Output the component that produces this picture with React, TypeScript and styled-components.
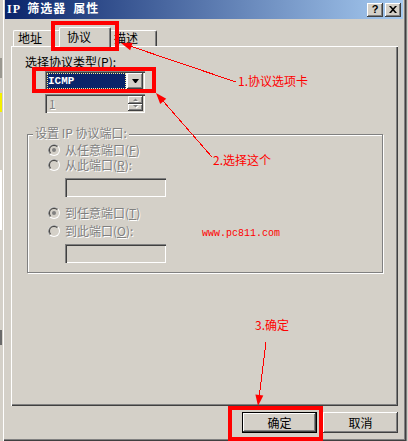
import React from 'react';
import styled, { createGlobalStyle, css } from 'styled-components';

const face = '#d4d0c8';
const shadow = '#808080';
const dark = '#404040';
const red = '#ff0000';

const GlobalStyle = createGlobalStyle`
  html, body {
    margin: 0;
    padding: 0;
    background: ${face};
  }
  body {
    font-family: "Noto Sans CJK SC", "Liberation Sans", sans-serif;
    font-size: 12px;
    color: #000;
  }
`;

const raised = css`
  background: ${face};
  box-shadow: inset -1px -1px ${dark}, inset 1px 1px #fff,
    inset -2px -2px ${shadow}, inset 2px 2px ${face};
`;

const sunken = css`
  box-shadow: inset 1px 1px ${shadow}, inset 2px 2px ${dark},
    inset -1px -1px #fff, inset -2px -2px ${face};
`;

const grayed = css`
  color: ${shadow};
  text-shadow: 1px 1px 0 #fff;
`;

const Screen = styled.div`
  position: relative;
  display: flex;
  width: 408px;
  height: 441px;
  overflow: hidden;
`;

const LeftBackdrop = styled.div`
  flex: none;
  width: 2px;
  background: linear-gradient(
    to bottom,
    ${face} 0 58px,
    #9a9890 58px 78px,
    ${face} 78px 93px,
    #f4f000 93px 112px,
    ${face} 112px 170px,
    #fff 170px 230px,
    ${face} 230px 330px,
    #6a6a6a 330px 345px,
    ${face} 345px
  );
`;

const RightBackdrop = styled.div`
  flex: none;
  width: 2px;
  background: linear-gradient(to right, ${shadow} 0 1px, ${face} 1px);
`;

const Window = styled.div`
  flex: none;
  width: 404px;
  height: 441px;
  box-sizing: border-box;
  padding: 0 3px 3px;
  display: flex;
  flex-direction: column;
  background: ${face};
  box-shadow: inset 1px 0 ${face}, inset 2px 0 #fff, inset -1px -1px ${dark},
    inset -2px -2px ${shadow};
`;

const TitleBar = styled.div`
  flex: none;
  height: 19px;
  display: flex;
  align-items: center;
  gap: 2px;
  padding: 0 2px 0 2px;
  background: linear-gradient(to right, #0a246a, #a6caf0);
`;

const TitleText = styled.div`
  flex: 1;
  color: #fff;
  font-family: "Liberation Serif", "Noto Sans CJK SC", serif;
  font-weight: bold;
  font-size: 12px;
  line-height: 13px;
  letter-spacing: 1px;
  word-spacing: 3px;
`;

const CaptionButton = styled.div`
  width: 16px;
  height: 14px;
  box-sizing: border-box;
  display: flex;
  align-items: center;
  justify-content: center;
  font-family: "Liberation Sans", sans-serif;
  font-weight: bold;
  font-size: 11px;
  line-height: 11px;
  ${raised};
`;

const Client = styled.div`
  flex: 1;
  display: flex;
  flex-direction: column;
  padding: 8px 5px 5px 6px;
`;

const TabRow = styled.div`
  display: flex;
  align-items: flex-end;
  height: 19px;
  padding-left: 2px;
  position: relative;
  z-index: 1;
`;

const Tab = styled.div<{ $active?: boolean }>`
  position: relative;
  z-index: ${(p) => (p.$active ? 2 : 1)};
  box-sizing: border-box;
  width: ${(p) => (p.$active ? 52 : 48)}px;
  height: ${(p) => (p.$active ? 20 : 16)}px;
  margin: ${(p) => (p.$active ? '0 -2px -1px' : '0')};
  padding: ${(p) => (p.$active ? '2px 0 0 7px' : '0 0 0 4px')};
  line-height: 13px;
  background: ${face};
  border-top: 1px solid #fff;
  border-left: 1px solid #fff;
  border-right: 1px solid ${dark};
  border-top-left-radius: 2px;
  border-top-right-radius: 2px;
  box-shadow: inset -1px 0 ${shadow};
`;

const Panel = styled.div`
  box-sizing: border-box;
  height: 360px;
  padding: 9px 0 0 14px;
  box-shadow: inset 1px 1px #fff, inset -1px -1px ${dark},
    inset -2px -2px ${shadow};
`;

const FieldLabel = styled.div`
  line-height: 13px;
`;

const Key = styled.span`
  text-decoration: underline;
`;

const Combo = styled.div`
  box-sizing: border-box;
  width: 100px;
  height: 20px;
  margin: 3px 0 0 20px;
  padding: 2px;
  display: flex;
  background: #fff;
  ${sunken};
`;

const ComboValue = styled.div`
  flex: 1;
  margin-right: 1px;
  padding-left: 1px;
  background: #0a246a;
  outline: 1px dotted #f5ec9a;
  outline-offset: -1px;
  color: #fff;
  font-family: "Liberation Mono", monospace;
  font-weight: bold;
  font-size: 11px;
  line-height: 16px;
`;

const DropButton = styled.div`
  width: 16px;
  display: flex;
  align-items: center;
  justify-content: center;
  ${raised};
`;

const Spin = styled.div`
  box-sizing: border-box;
  width: 100px;
  height: 19px;
  margin: 3px 0 0 20px;
  padding: 2px;
  display: flex;
  background: ${face};
  ${sunken};
`;

const SpinValue = styled.div`
  flex: 1;
  padding-left: 2px;
  line-height: 15px;
  ${grayed};
`;

const SpinButtons = styled.div`
  width: 15px;
  display: flex;
  flex-direction: column;
`;

const SpinButton = styled.div`
  flex: 1;
  display: flex;
  align-items: center;
  justify-content: center;
  ${raised};
`;

const Group = styled.fieldset`
  box-sizing: border-box;
  width: 356px;
  margin: 13px 0 0 2px;
  padding: 0 0 9px;
  min-inline-size: 0;
  border: 1px solid ${shadow};
  box-shadow: 1px 1px 0 #fff, inset 1px 1px 0 #fff;
`;

const Legend = styled.legend`
  margin-left: 5px;
  padding: 0 2px 3px;
  line-height: 13px;
  background: ${face};
  ${grayed};
`;

const RadioRow = styled.div<{ $gap: number }>`
  display: flex;
  align-items: center;
  gap: 5px;
  height: 14px;
  margin-top: ${(p) => p.$gap}px;
  padding-left: 20px;
  line-height: 14px;
  ${grayed};
`;

const PortBox = styled.div<{ $gap: number }>`
  width: 101px;
  height: 19px;
  margin: ${(p) => p.$gap}px 0 0 37px;
  background: ${face};
  ${sunken};
`;

const ButtonRow = styled.div`
  display: flex;
  justify-content: flex-end;
  gap: 6px;
  margin-top: 6px;
`;

const PushButton = styled.div<{ $default?: boolean }>`
  box-sizing: border-box;
  width: 75px;
  height: 21px;
  display: flex;
  align-items: center;
  justify-content: center;
  line-height: 13px;
  ${raised};
  border: ${(p) => (p.$default ? '1px solid #000' : 'none')};
`;

const Overlay = styled.div`
  position: absolute;
  inset: 0;
  z-index: 10;
  pointer-events: none;
`;

const RedBox = styled.div<{ $x: number; $y: number; $w: number; $h: number }>`
  position: absolute;
  left: ${(p) => p.$x}px;
  top: ${(p) => p.$y}px;
  width: ${(p) => p.$w}px;
  height: ${(p) => p.$h}px;
  box-sizing: border-box;
  border: 4px solid ${red};
`;

const Note = styled.div<{ $x: number; $y: number }>`
  position: absolute;
  left: ${(p) => p.$x}px;
  top: ${(p) => p.$y}px;
  color: ${red};
  line-height: 13px;
  white-space: nowrap;
`;

const Watermark = styled(Note)`
  font-family: "Liberation Mono", monospace;
  font-size: 10px;
  line-height: 12px;
`;

const Arrows = styled.svg`
  position: absolute;
  left: 0;
  top: 0;
`;

const callouts = [
  { sx: 236, sy: 82, tx: 121, ty: 43 },
  { sx: 212, sy: 157, tx: 156, ty: 93 },
  { sx: 266, sy: 342, tx: 258, ty: 406 },
];

const arrowShape = (sx: number, sy: number, tx: number, ty: number) => {
  const len = Math.hypot(tx - sx, ty - sy);
  const ux = (tx - sx) / len;
  const uy = (ty - sy) / len;
  const bx = tx - ux * 11;
  const by = ty - uy * 11;
  return {
    bx,
    by,
    head: `${tx},${ty} ${bx - uy * 4},${by + ux * 4} ${bx + uy * 4},${by - ux * 4}`,
  };
};

const RadioMark: React.FC<{ checked?: boolean }> = ({ checked }) => (
  <svg width="12" height="12" viewBox="0 0 12 12">
    <circle cx="6" cy="6" r="6" fill="#fff" />
    <path d="M1.76 10.24A6 6 0 0 1 10.24 1.76Z" fill={shadow} />
    <circle cx="6" cy="6" r="5" fill={face} />
    <path d="M2.46 9.54A5 5 0 0 1 9.54 2.46Z" fill={dark} />
    <circle cx="6" cy="6" r="4" fill={face} />
    {checked && <circle cx="6" cy="6" r="2" fill={shadow} />}
  </svg>
);

const App: React.FC = () => {
  return (
    <>
      <GlobalStyle />
      <Screen>
        <LeftBackdrop />
        <Window>
          <TitleBar>
            <TitleText>IP 筛选器 属性</TitleText>
            <CaptionButton>?</CaptionButton>
            <CaptionButton>
              <svg width="8" height="7" viewBox="0 0 8 7">
                <path
                  d="M0 0h2l2 2.3L6 0h2L5 3.5 8 7H6L4 4.7 2 7H0l3-3.5z"
                  fill="#000"
                />
              </svg>
            </CaptionButton>
          </TitleBar>
          <Client>
            <TabRow>
              <Tab>地址</Tab>
              <Tab $active>协议</Tab>
              <Tab>描述</Tab>
            </TabRow>
            <Panel>
              <FieldLabel>
                选择协议类型(<Key>P</Key>):
              </FieldLabel>
              <Combo>
                <ComboValue>ICMP</ComboValue>
                <DropButton>
                  <svg width="7" height="4" viewBox="0 0 7 4">
                    <path d="M0 0h7L4 4H3z" fill="#000" />
                  </svg>
                </DropButton>
              </Combo>
              <Spin>
                <SpinValue>1</SpinValue>
                <SpinButtons>
                  <SpinButton>
                    <svg width="6" height="4" viewBox="0 0 6 4">
                      <path d="M1 4h5L3.5 1.5z" fill="#fff" />
                      <path d="M0 3h5L2.5 0.5z" fill={shadow} />
                    </svg>
                  </SpinButton>
                  <SpinButton>
                    <svg width="6" height="4" viewBox="0 0 6 4">
                      <path d="M1 1h5L3.5 3.5z" fill="#fff" />
                      <path d="M0 0h5L2.5 2.5z" fill={shadow} />
                    </svg>
                  </SpinButton>
                </SpinButtons>
              </Spin>
              <Group>
                <Legend>设置 IP 协议端口:</Legend>
                <RadioRow $gap={1}>
                  <RadioMark checked />
                  <span>
                    从任意端口(<Key>F</Key>)
                  </span>
                </RadioRow>
                <RadioRow $gap={1}>
                  <RadioMark />
                  <span>
                    从此端口(<Key>R</Key>):
                  </span>
                </RadioRow>
                <PortBox $gap={6} />
                <RadioRow $gap={9}>
                  <RadioMark checked />
                  <span>
                    到任意端口(<Key>T</Key>)
                  </span>
                </RadioRow>
                <RadioRow $gap={4}>
                  <RadioMark />
                  <span>
                    到此端口(<Key>O</Key>):
                  </span>
                </RadioRow>
                <PortBox $gap={6} />
              </Group>
            </Panel>
            <ButtonRow>
              <PushButton $default>确定</PushButton>
              <PushButton>取消</PushButton>
            </ButtonRow>
          </Client>
        </Window>
        <RightBackdrop />

        <Overlay>
          <RedBox $x={51} $y={21} $w={68} $h={30} />
          <RedBox $x={32} $y={67} $w={124} $h={26} />
          <RedBox $x={228} $y={406} $w={95} $h={35} />
          <Arrows width="408" height="441" viewBox="0 0 408 441">
            {callouts.map(({ sx, sy, tx, ty }) => {
              const a = arrowShape(sx, sy, tx, ty);
              return (
                <g key={`${sx}-${sy}`}>
                  <line
                    x1={sx}
                    y1={sy}
                    x2={a.bx}
                    y2={a.by}
                    stroke={red}
                    strokeWidth="1"
                    shapeRendering="crispEdges"
                  />
                  <polygon points={a.head} fill={red} />
                </g>
              );
            })}
          </Arrows>
          <Note $x={238} $y={74}>1.协议选项卡</Note>
          <Note $x={213} $y={153}>2.选择这个</Note>
          <Note $x={255} $y={318}>3.确定</Note>
          <Watermark $x={202} $y={228}>
            www.pc811.com
          </Watermark>
        </Overlay>
      </Screen>
    </>
  );
};

export default App;
